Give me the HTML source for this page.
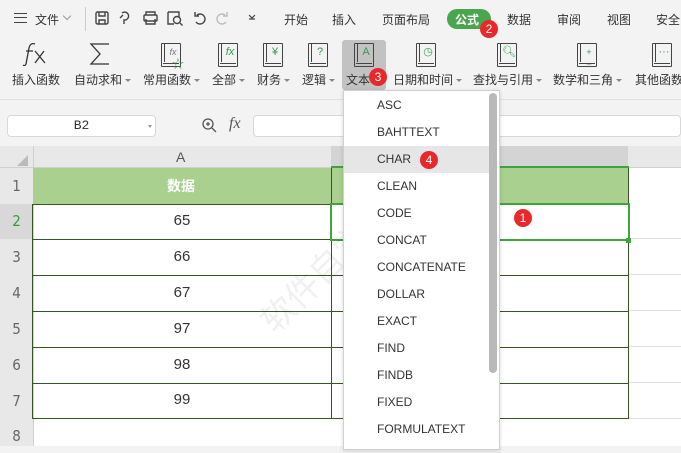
<!DOCTYPE html>
<html><head><meta charset="utf-8"><style>
*{margin:0;padding:0;box-sizing:border-box}
body{width:681px;height:446px;overflow:hidden;background:#f3f3f3;font-family:"Liberation Sans","Noto Sans CJK SC",sans-serif;position:relative;color:#333}
.a{position:absolute}
.t{font-size:12px;white-space:nowrap}
.lbl{font-size:12px;white-space:nowrap;top:71px}
.car{display:inline-block;width:0;height:0;border-left:3px solid transparent;border-right:3px solid transparent;border-top:3px solid #888;vertical-align:middle;margin-left:3px}
.badge{position:absolute;width:18px;height:18px;border-radius:50%;background:#e8282b;color:#fff;font-size:12px;text-align:center;line-height:18px}
.book{position:absolute;top:43px;width:20px;height:24px;border:1.5px solid #444;border-radius:1px}
.book:after{content:"";position:absolute;left:1px;right:1px;bottom:2px;border-top:1px solid #444}
.book i{position:absolute;left:2px;top:0;bottom:4px;border-left:1px solid #444}
.book b{position:absolute;left:4px;right:0;top:2px;text-align:center;font-weight:normal;color:#3a9a4e;font-size:11px;line-height:12px}
.rh{position:absolute;left:0;width:33px;background:#e8e8e8;color:#666;font-size:15px;text-align:center;font-family:"DejaVu Sans Condensed","Liberation Sans",sans-serif}
.cell{position:absolute;font-size:15px;text-align:center}
.it{position:absolute;left:34px;font-size:12px;color:#333}
</style></head><body>
<div class="a" style="left:14px;top:13px;width:13px;height:10px;border-top:1.5px solid #444;border-bottom:1.5px solid #444"></div>
<div class="a" style="left:14px;top:17px;width:13px;border-top:1.5px solid #444"></div>
<div class="a t" style="left:35px;top:11px">文件</div>
<div class="a" style="left:64px;top:13px;width:6px;height:6px;border-right:1px solid #999;border-bottom:1px solid #999;transform:rotate(45deg)"></div>
<div class="a" style="left:85px;top:7px;height:24px;border-left:1px solid #ccc"></div>
<svg class="a" style="left:94px;top:9px" width="175" height="18" fill="none" stroke="#444" stroke-width="1.4">
<rect x="2" y="3" width="12" height="12" rx="1.5"/><path d="M5 3v4h6V3M5 15v-4h6v4"/>
<path d="M28 4a4 4 0 1 1 2 7v4M26 9l3-3"/>
<rect x="50" y="6" width="13" height="6" rx="1"/><path d="M52 6V3h9v3M52 10v5h9v-5"/>
<path d="M74 3h11v5M74 3v12h6"/><circle cx="83" cy="11" r="3.5"/><path d="M86 14l2.5 2.5"/>
<path d="M103 6a5 5 0 1 1 -1 7M101 3v4h4"/>
<path stroke="#bbb" d="M131 6a5 5 0 1 0 1 7M133 3v4h-4"/>
<path d="M155 6l3 3 3-3M155 10h6" stroke-width="1.2"/>
</svg>
<div class="a t" style="left:284px;top:11px">开始</div>
<div class="a t" style="left:332px;top:11px">插入</div>
<div class="a t" style="left:382px;top:11px">页面布局</div>
<div class="a" style="left:447px;top:9px;width:44px;height:20px;border-radius:10px;background:#4aa64e"></div>
<div class="a t" style="left:455px;top:11px;color:#fff;font-weight:bold">公式</div>
<div class="badge" style="left:480px;top:20px">2</div>
<div class="a t" style="left:507px;top:11px">数据</div>
<div class="a t" style="left:557px;top:11px">审阅</div>
<div class="a t" style="left:607px;top:11px">视图</div>
<div class="a t" style="left:656px;top:11px">安全</div>
<div class="a" style="left:342px;top:40px;width:44px;height:50px;background:#c2c2c2;border-radius:3px"></div>
<svg class="a" style="left:22px;top:42px" width="30" height="24" fill="none" stroke="#333" stroke-width="1.3"><path d="M13 2c-3-1-5 0-6 4L4 22c-1 2-2 2-3 1M4 9h7M13 9l10 12M22 9L13 21"/></svg>
<svg class="a" style="left:88px;top:41px" width="24" height="26" fill="none" stroke="#333" stroke-width="1.3"><path d="M21 3H3l9 10-9 10h18"/></svg>
<div class="book" style="left:161px"><i></i><b style="font-style:italic;color:#777;font-size:9px">fx</b></div>
<div class="a" style="left:172px;top:55px;color:#3a9a4e;font-size:12px">☆</div>
<div class="book" style="left:218px"><i></i><b style="font-style:italic">fx</b></div>
<div class="book" style="left:263px"><i></i><b>¥</b></div>
<div class="book" style="left:308px"><i></i><b>?</b></div>
<div class="book" style="left:354px"><i></i><b>A</b></div>
<div class="book" style="left:416px"><i></i><b>◷</b></div>
<div class="book" style="left:497px"><i></i><b>🔍︎</b></div>
<div class="book" style="left:577px"><i></i><b style="font-size:9px">+<br>−</b></div>
<div class="book" style="left:652px"><i></i><b>···</b></div>
<div class="a lbl" style="left:12px">插入函数</div>
<div class="a lbl" style="left:74px">自动求和<span class="car"></span></div>
<div class="a lbl" style="left:143px">常用函数<span class="car"></span></div>
<div class="a lbl" style="left:212px">全部<span class="car"></span></div>
<div class="a lbl" style="left:257px">财务<span class="car"></span></div>
<div class="a lbl" style="left:302px">逻辑<span class="car"></span></div>
<div class="a lbl" style="left:346px">文本</div>
<div class="badge" style="left:369px;top:68px">3</div>
<div class="a lbl" style="left:393px">日期和时间<span class="car"></span></div>
<div class="a lbl" style="left:473px">查找与引用<span class="car"></span></div>
<div class="a lbl" style="left:553px">数学和三角<span class="car"></span></div>
<div class="a lbl" style="left:635px">其他函数</div>
<div class="a" style="left:0;top:99px;width:681px;border-top:1px solid #e0e0e0"></div>
<div class="a" style="left:7px;top:115px;width:149px;height:22px;background:#fff;border:1px solid #d8d8d8;border-radius:4px;font-size:13px;text-align:center;line-height:20px;font-family:'Liberation Mono',monospace">B2</div>
<div class="a" style="left:148px;top:125px;border-left:2px solid transparent;border-right:2px solid transparent;border-top:3px solid #999"></div>
<svg class="a" style="left:201px;top:117px" width="18" height="18" fill="none" stroke="#555" stroke-width="1.3"><circle cx="7" cy="7" r="5"/><path d="M11 11l4 4M5 7h4M7 5v4"/></svg>
<div class="a" style="left:229px;top:115px;font-family:'Liberation Serif',serif;font-style:italic;font-size:16px;color:#555">fx</div>
<div class="a" style="left:253px;top:115px;width:428px;height:22px;background:#fff;border:1px solid #d8d8d8;border-radius:4px"></div>
<div class="a" style="left:0;top:146px;width:681px;height:300px;background:#fff"></div>
<div class="a" style="left:0;top:146px;width:681px;height:22px;background:#e8e8e8;border-bottom:1px solid #d0d0d0"></div>
<div class="a" style="left:331px;top:146px;width:297px;height:22px;background:#d4d4d4"></div>
<div class="a" style="left:17px;top:155px;width:0;height:0;border-left:11px solid transparent;border-bottom:11px solid #bbb"></div>
<div class="a" style="left:33px;top:146px;width:1px;height:300px;background:#d0d0d0"></div>
<div class="a" style="left:176px;top:149px;font-size:14px;color:#555">A</div>
<div class="rh" style="top:168px;height:36px;line-height:36px">1</div>
<div class="rh" style="top:204px;height:35px;line-height:35px;color:#3a9a3a;background:#d8d8d8">2</div>
<div class="rh" style="top:239px;height:36px;line-height:36px">3</div>
<div class="rh" style="top:275px;height:36px;line-height:36px">4</div>
<div class="rh" style="top:311px;height:36px;line-height:36px">5</div>
<div class="rh" style="top:347px;height:36px;line-height:36px">6</div>
<div class="rh" style="top:383px;height:36px;line-height:36px">7</div>
<div class="rh" style="top:419px;height:27px;line-height:34px">8</div>
<div class="a" style="left:33px;top:168px;width:595px;height:36px;background:#a9d08e"></div>
<div class="a" style="left:167px;top:176px;font-size:14px;color:#fff;font-weight:bold">数据</div>
<div class="a" style="left:33px;top:239px;width:596px;border-top:1px solid #375623"></div>
<div class="a" style="left:33px;top:275px;width:596px;border-top:1px solid #375623"></div>
<div class="a" style="left:33px;top:311px;width:596px;border-top:1px solid #375623"></div>
<div class="a" style="left:33px;top:347px;width:596px;border-top:1px solid #375623"></div>
<div class="a" style="left:33px;top:383px;width:596px;border-top:1px solid #375623"></div>
<div class="a" style="left:33px;top:418px;width:596px;border-top:1px solid #375623"></div>
<div class="a" style="left:629px;top:203px;width:52px;height:216px;background:repeating-linear-gradient(#fff 0 35px,#ddd 35px 36px)"></div>
<div class="a" style="left:33px;top:204px;width:298px;border-top:1px solid #375623"></div>
<div class="a" style="left:32px;top:204px;height:215px;border-left:1px solid #375623"></div>
<div class="a" style="left:331px;top:168px;height:251px;border-left:1px solid #375623"></div>
<div class="a" style="left:628px;top:168px;height:251px;border-left:1px solid #375623"></div>
<div class="a" style="left:331px;top:166px;width:298px;border-top:2px solid #3fa33f"></div>
<div class="a" style="left:330px;top:203px;width:300px;height:38px;border:2px solid #3fa33f"></div>
<div class="a" style="left:626px;top:238px;width:5px;height:5px;background:#3fa33f"></div>
<div class="cell" style="left:33px;width:298px;top:212px">65</div>
<div class="cell" style="left:33px;width:298px;top:248px">66</div>
<div class="cell" style="left:33px;width:298px;top:284px">67</div>
<div class="cell" style="left:33px;width:298px;top:320px">97</div>
<div class="cell" style="left:33px;width:298px;top:356px">98</div>
<div class="cell" style="left:33px;width:298px;top:391px">99</div>
<div class="badge" style="left:514px;top:209px">1</div>
<div class="a" style="left:240px;top:240px;transform:rotate(-45deg);font-size:34px;color:rgba(0,0,0,0.06);white-space:nowrap">软件自学网</div>
<div class="a" style="left:343px;top:90px;width:157px;height:360px;background:#fff;border:1px solid #d0d0d0;box-shadow:0 1px 4px rgba(0,0,0,.15)"></div>
<div class="a" style="left:344px;top:146px;width:145px;height:27px;background:#e6e6e6"></div>
<div class="a" style="left:489px;top:93px;width:8px;height:280px;background:#b9b9b9;border-radius:4px"></div>
<div class="it" style="left:377px;top:98px">ASC</div>
<div class="it" style="left:377px;top:125px">BAHTTEXT</div>
<div class="it" style="left:377px;top:152px">CHAR</div>
<div class="badge" style="left:420px;top:151px">4</div>
<div class="it" style="left:377px;top:179px">CLEAN</div>
<div class="it" style="left:377px;top:206px">CODE</div>
<div class="it" style="left:377px;top:233px">CONCAT</div>
<div class="it" style="left:377px;top:260px">CONCATENATE</div>
<div class="it" style="left:377px;top:287px">DOLLAR</div>
<div class="it" style="left:377px;top:314px">EXACT</div>
<div class="it" style="left:377px;top:341px">FIND</div>
<div class="it" style="left:377px;top:368px">FINDB</div>
<div class="it" style="left:377px;top:395px">FIXED</div>
<div class="it" style="left:377px;top:422px">FORMULATEXT</div>
</body></html>
